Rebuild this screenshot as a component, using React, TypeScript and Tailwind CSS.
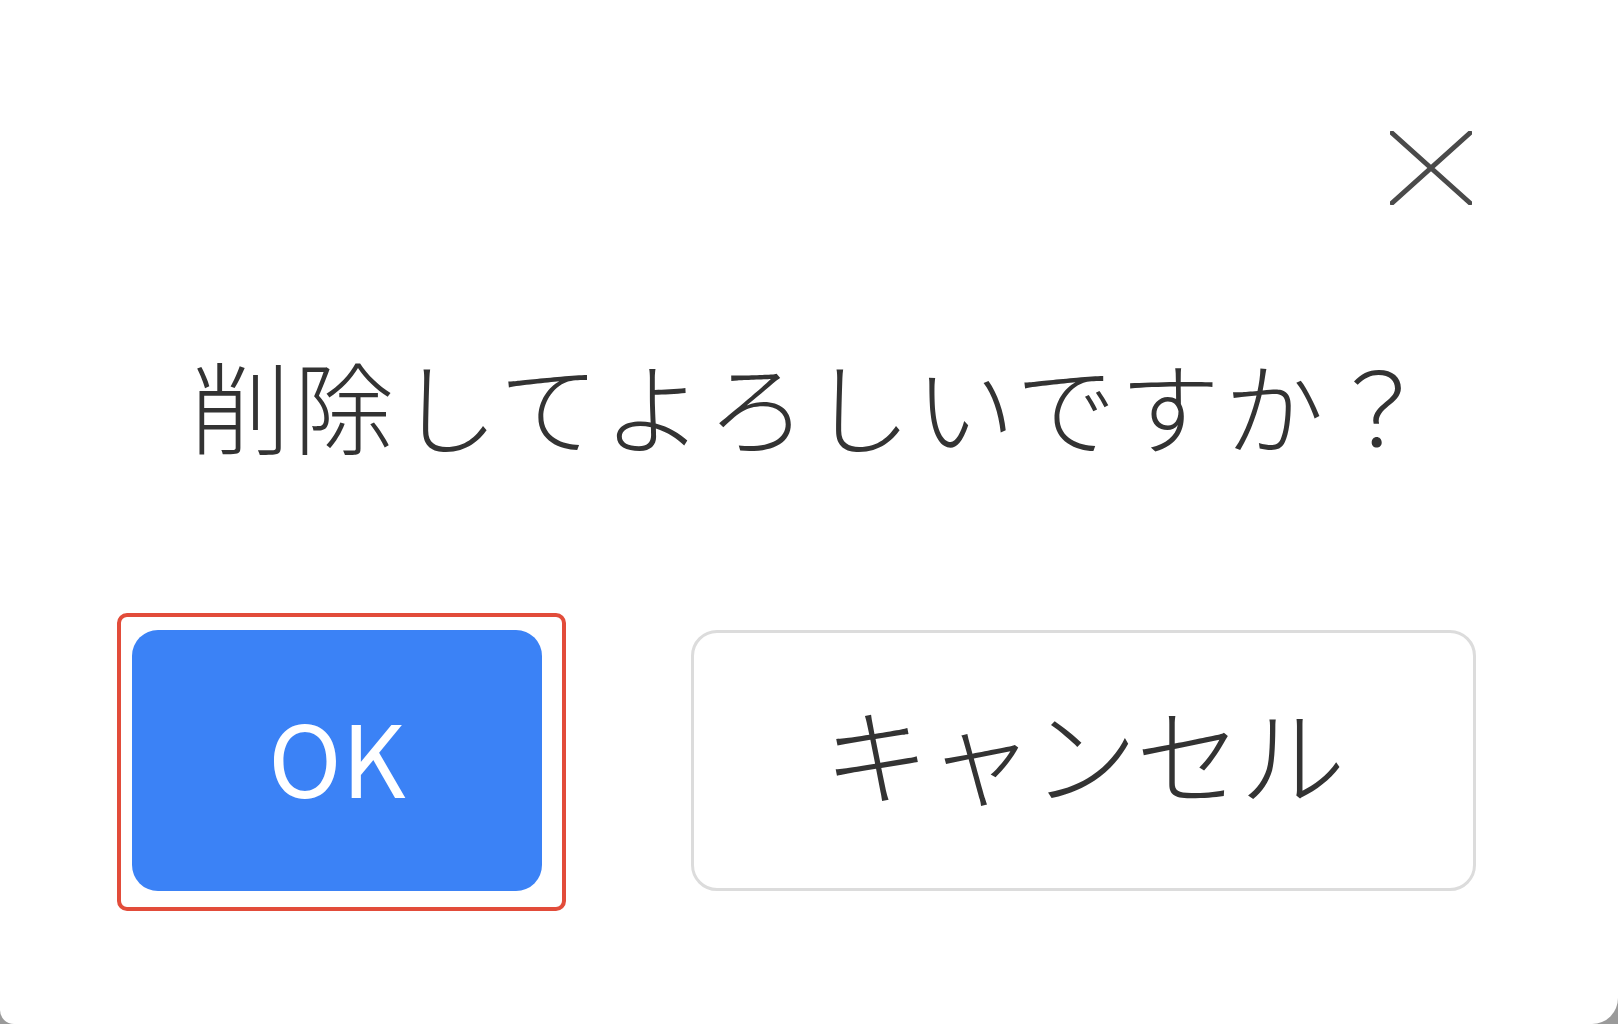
const font = { fontFamily: '"Noto Sans CJK JP", "Noto Sans", sans-serif' }

function CloseIcon() {
  return (
    <svg width="82" height="74" viewBox="0 0 82 74" className="block" aria-hidden>
      <path d="M2 2 L80 72 M80 2 L2 72" stroke="#4a4a4a" strokeWidth="5" strokeLinecap="square" fill="none" />
    </svg>
  )
}

export default function App() {
  return (
    <div className="h-[1024px] w-[1618px] overflow-hidden bg-[#9a9a9a]" style={font}>
      <div className="flex h-full w-full flex-col rounded-bl-[14px] rounded-br-[26px] bg-white">
        <div className="flex justify-end pr-[146px] pt-[131px]">
          <button type="button" aria-label="閉じる"><CloseIcon /></button>
        </div>

        <p className="mt-[149px] pl-[190px] text-[100px] font-light leading-[100px] tracking-[4px] text-[#333]">削除してよろしいですか？</p>

        <div className="mt-[176px] flex items-start gap-[149px] pl-[132px]">
          <div className="relative">
            <div className="pointer-events-none absolute -left-[15px] -top-[17px] h-[298px] w-[449px] rounded-[10px] border-4 border-[#e24c3a]" />
            <button type="button" className="flex h-[261px] w-[410px] items-center justify-center rounded-[26px] bg-[#3b82f6] pb-[10px] text-[99px] leading-none text-white">OK</button>
          </div>
          <button type="button" className="flex h-[261px] w-[785px] items-center justify-center rounded-[26px] border-[3px] border-[#dcdcdc] bg-white pb-[20px] text-[106px] font-light leading-none tracking-[-2px] text-[#333]">キャンセル</button>
        </div>
      </div>
    </div>
  )
}
